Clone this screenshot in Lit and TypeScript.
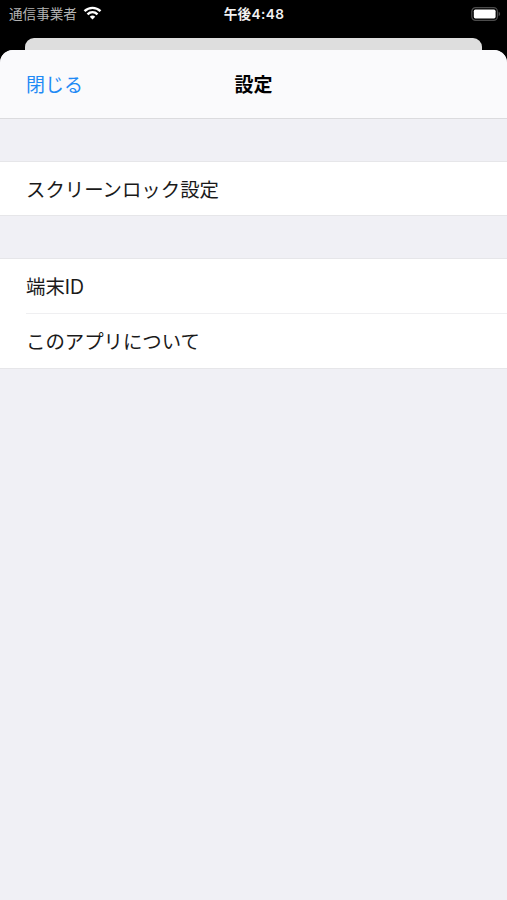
import { LitElement, html, css } from "lit";
import { customElement } from "lit/decorators.js";

@customElement("app-root")
export class AppRoot extends LitElement {
  static styles = css`
    :host {
      display: block;
      height: 900px;
      background: #000;
      font-family: Inter, "Noto Sans CJK JP", sans-serif;
      color: #1a1a1a;
      overflow: hidden;
    }
    .screen { display: flex; flex-direction: column; height: 900px; }
    .status {
      height: 38px;
      display: grid;
      grid-template-columns: 1fr auto 1fr;
      box-sizing: border-box;
      padding: 0 6px 11px 7px;
      align-items: center;
      color: #f2f2f2;
      font-size: 13.6px;
      line-height: 20px;
    }
    .carrier { display: flex; align-items: center; gap: 6px; color: #b4b4b4; padding-left: 2px; }
    .time { font-weight: 600; letter-spacing: 0.4px; }
    .battery { justify-self: end; display: block; }
    .wifi { display: block; margin-top: -1px; }
    .behind {
      flex: none;
      height: 12px;
      margin: 0 25px;
      background: #dedede;
      border-radius: 9px 9px 0 0;
    }
    .sheet {
      flex: 1;
      background: #f0f0f5;
      border-radius: 13px 13px 0 0;
      overflow: hidden;
    }
    .nav {
      height: 69px;
      box-sizing: border-box;
      border-bottom: 1px solid #dbdbde;
      background: #fafafc;
      display: grid;
      grid-template-columns: 1fr auto 1fr;
      align-items: center;
      padding: 0 26px 2px;
      font-size: 19px;
    }
    .close { color: #1f8af5; }
    .title { font-weight: 700; color: #000; }
    .group {
      margin-top: 42px;
      background: #fff;
      border-top: 1px solid #e6e6e9;
      border-bottom: 1px solid #e6e6e9;
      padding-left: 26px;
      font-size: 19.4px;
    }
    .row { height: 53px; box-sizing: border-box; padding-bottom: 1px; display: flex; align-items: center; }
    .row:not(:only-child) { height: 54px; }
    .row + .row:not(:only-child) { height: 55px; border-top: 1px solid #efeff1; }
  `;

  render() {
    return html`
      <div class="screen">
        <div class="status">
          <div class="carrier">
            <span>通信事業者</span>
            <svg class="wifi" width="19" height="14" viewBox="0 0 18 14" fill="none" stroke="#fff" stroke-width="2.4">
              <path d="M1 5.2C5.6.7 12.4.7 17 5.2M4 8.3c2.9-2.8 7.1-2.8 10 0" />
              <path d="M9 13.4 6.3 10.7c1.5-1.5 3.9-1.5 5.4 0z" fill="#fff" stroke="none" />
            </svg>
          </div>
          <span class="time">午後4:48</span>
          <svg class="battery" width="30" height="14" viewBox="0 0 30 14">
            <rect x=".8" y=".6" width="25.6" height="12.8" rx="3.8" fill="none" stroke="#4c4c4c" stroke-width="1.2" />
            <rect x="2.8" y="2.6" width="21.8" height="8.8" rx="1.6" fill="#fff" />
            <path d="M27.6 4.8c2 .7 2 3.7 0 4.4z" fill="#4c4c4c" />
          </svg>
        </div>
        <div class="behind"></div>
        <main class="sheet">
          <header class="nav">
            <span class="close">閉じる</span>
            <span class="title">設定</span>
          </header>
          <section class="group"><div class="row">スクリーンロック設定</div></section>
          <section class="group">
            <div class="row">端末ID</div>
            <div class="row">このアプリについて</div>
          </section>
        </main>
      </div>
    `;
  }
}
